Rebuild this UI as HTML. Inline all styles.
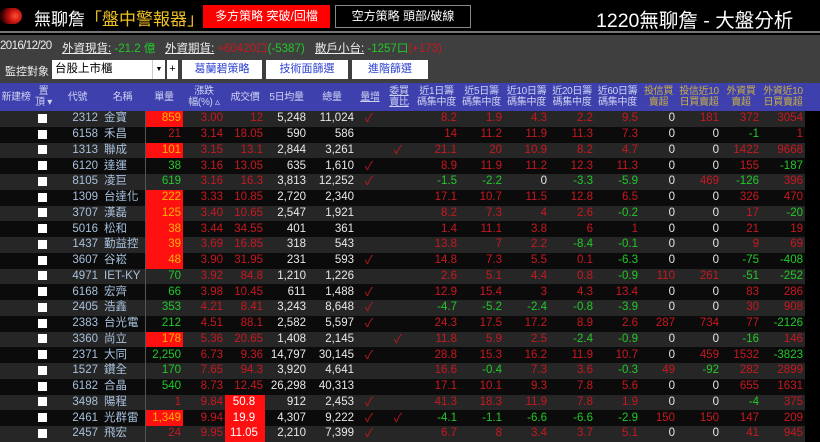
<!DOCTYPE html><html><head><meta charset="utf-8"><style>
*{margin:0;padding:0;box-sizing:border-box}
body{width:820px;height:442px;overflow:hidden;background:#000;font-family:"Liberation Sans","Noto Sans CJK TC",sans-serif;color:#ddd;position:relative}
.top{position:absolute;left:0;top:0;width:820px;height:33px;background:#000;border-bottom:2px solid #777}
.ab{position:absolute;white-space:nowrap}
.bar{position:absolute;left:0;top:35px;width:820px;height:48px;background:#3f3f3f}
.btn{position:absolute;background:#fff;color:#2a3fd0;font-size:11px;text-align:center;line-height:18px;height:19px;top:60px}
.hdr{position:absolute;left:0;top:83px;width:820px;height:28px;background:#3e40ae}
.h{position:absolute;top:83px;height:28px;display:flex;align-items:center;justify-content:center;text-align:center;font-size:10px;line-height:11px;color:#cfd3f0;white-space:nowrap;letter-spacing:-0.3px}
.y{color:#c8b040}
.t{font-size:11.5px;top:40px;color:#eee}
table{position:absolute;left:0;top:111px;border-collapse:collapse;table-layout:fixed;width:805px;font-size:11.5px}
td{height:15.75px;padding:0 2px 0 0;text-align:right;white-space:nowrap;overflow:hidden;line-height:15px}
tr:nth-child(odd){background:#262626}
tr:nth-child(even){background:#0b0b0b}
.r{color:#c81820}.g{color:#22c82a}.w{color:#e8e8e8}
.c{color:#a8c0dc}.n{color:#a8c0dc;text-align:left;padding-left:4px}
.R{background:#ff1010;color:#ffb400}.P{background:#ff1010;color:#fff}
.cb{text-align:center}.cb i{display:inline-block;width:9px;height:9px;background:#fff;vertical-align:middle}
.k{color:#c01820;text-align:center;font-size:12px}
td.d{border-left:1px solid #555}
</style></head><body>
<div class="top">
<div class="ab" style="left:0;top:8px;width:22px;height:16px;border-radius:8px;background:radial-gradient(circle at 70% 50%,#ff5030 0,#c01010 40%,#300 80%)"></div>
<div class="ab" style="left:34px;top:5px;font-size:17px;color:#fff">無聊詹<span style="color:#f0c020">「盤中警報器」</span></div>
<div class="ab" style="left:203px;top:5px;width:127px;height:23px;background:#f00;color:#fff;font-size:12px;text-align:center;line-height:23px">多方策略 突破/回檔</div>
<div class="ab" style="left:335px;top:5px;width:136px;height:23px;border:1px solid #888;color:#fff;font-size:12px;text-align:center;line-height:21px">空方策略 頭部/破線</div>
<div class="ab" style="left:596px;top:4px;font-size:19.5px;color:#fff">1220無聊詹 - 大盤分析</div>
</div>
<div class="bar"></div>
<div class="ab t" style="left:0;letter-spacing:-0.6px">2016/12/20</div>
<div class="ab t" style="left:62px"><u>外資現貨:</u> <span class="g">-21.2 億</span></div>
<div class="ab t" style="left:165px"><u>外資期貨:</u> <span class="r">+60420口</span><span class="g">(-5387)</span></div>
<div class="ab t" style="left:315px"><u>散戶小台:</u> <span class="g">-1257口</span><span class="r">(+173)</span></div>
<div class="ab" style="left:5px;top:63px;font-size:11px;color:#eee">監控對象</div>
<div class="ab" style="left:52px;top:60px;width:100px;height:19px;background:#fff;color:#000;font-size:11.5px;line-height:19px;padding-left:3px">台股上市櫃</div>
<div class="ab" style="left:152px;top:60px;width:13px;height:19px;background:#fff;color:#000;font-size:7px;line-height:19px;text-align:center;border-left:1px solid #ccc">▼</div>
<div class="ab" style="left:167px;top:60px;width:11px;height:19px;background:#fff;color:#000;font-size:11px;line-height:19px;text-align:center">+</div>
<div class="btn" style="left:182px;width:80px">葛蘭碧策略</div>
<div class="btn" style="left:266px;width:82px">技術面篩選</div>
<div class="btn" style="left:352px;width:76px">進階篩選</div>
<div class="hdr"></div>
<div class="h" style="left:0;width:32px">新建榜</div>
<div class="h" style="left:32px;width:23px">置<br>頂 ▾</div>
<div class="h" style="left:55px;width:45px">代號</div>
<div class="h" style="left:100px;width:45px">名稱</div>
<div class="h" style="left:145px;width:38px">單量</div>
<div class="h" style="left:183px;width:42px">漲跌<br>幅(%) ▵</div>
<div class="h" style="left:225px;width:40px">成交價</div>
<div class="h" style="left:265px;width:43px">5日均量</div>
<div class="h" style="left:308px;width:48px">總量</div>
<div class="h" style="left:356px;width:28px"><u>量增</u></div>
<div class="h" style="left:384px;width:30px"><u>委買<br>賣比</u></div>
<div class="h" style="left:414px;width:45px">近1日籌<br>碼集中度</div>
<div class="h" style="left:459px;width:45px">近5日籌<br>碼集中度</div>
<div class="h" style="left:504px;width:45px">近10日籌<br>碼集中度</div>
<div class="h" style="left:549px;width:46px">近20日籌<br>碼集中度</div>
<div class="h" style="left:595px;width:45px">近60日籌<br>碼集中度</div>
<div class="h y" style="left:640px;width:37px">投信買<br>賣超</div>
<div class="h y" style="left:677px;width:44px">投信近10<br>日買賣超</div>
<div class="h y" style="left:721px;width:40px">外資買<br>賣超</div>
<div class="h y" style="left:761px;width:44px">外資近10<br>日買賣超</div>
<table>
<colgroup><col style="width:32px"><col style="width:23px"><col style="width:45px"><col style="width:45px"><col style="width:38px"><col style="width:42px"><col style="width:40px"><col style="width:43px"><col style="width:48px"><col style="width:28px"><col style="width:30px"><col style="width:45px"><col style="width:45px"><col style="width:45px"><col style="width:46px"><col style="width:45px"><col style="width:37px"><col style="width:44px"><col style="width:40px"><col style="width:44px"></colgroup>
<tr><td></td><td class="cb"><i></i></td><td class="c">2312</td><td class="n">金寶</td><td class="R d">859</td><td class="r">3.00</td><td class="r">12</td><td class="w">5,248</td><td class="w">11,024</td><td class="k">✓</td><td class="k"></td><td class="r">8.2</td><td class="r">1.9</td><td class="r">4.3</td><td class="r">2.2</td><td class="r">9.5</td><td class="w">0</td><td class="r">181</td><td class="r">372</td><td class="r">3054</td></tr>
<tr><td></td><td class="cb"><i></i></td><td class="c">6158</td><td class="n">禾昌</td><td class="r d">21</td><td class="r">3.14</td><td class="r">18.05</td><td class="w">590</td><td class="w">586</td><td class="k"></td><td class="k"></td><td class="r">14</td><td class="r">11.2</td><td class="r">11.9</td><td class="r">11.3</td><td class="r">7.3</td><td class="w">0</td><td class="w">0</td><td class="g">-1</td><td class="r">1</td></tr>
<tr><td></td><td class="cb"><i></i></td><td class="c">1313</td><td class="n">聯成</td><td class="R d">101</td><td class="r">3.15</td><td class="r">13.1</td><td class="w">2,844</td><td class="w">3,261</td><td class="k"></td><td class="k">✓</td><td class="r">21.1</td><td class="r">20</td><td class="r">10.9</td><td class="r">8.2</td><td class="r">4.7</td><td class="w">0</td><td class="w">0</td><td class="r">1422</td><td class="r">9668</td></tr>
<tr><td></td><td class="cb"><i></i></td><td class="c">6120</td><td class="n">達運</td><td class="g d">38</td><td class="r">3.16</td><td class="r">13.05</td><td class="w">635</td><td class="w">1,610</td><td class="k">✓</td><td class="k"></td><td class="r">8.9</td><td class="r">11.9</td><td class="r">11.2</td><td class="r">12.3</td><td class="r">11.3</td><td class="w">0</td><td class="w">0</td><td class="r">155</td><td class="g">-187</td></tr>
<tr><td></td><td class="cb"><i></i></td><td class="c">8105</td><td class="n">凌巨</td><td class="g d">619</td><td class="r">3.16</td><td class="r">16.3</td><td class="w">3,813</td><td class="w">12,252</td><td class="k">✓</td><td class="k"></td><td class="g">-1.5</td><td class="g">-2.2</td><td class="w">0</td><td class="g">-3.3</td><td class="g">-5.9</td><td class="w">0</td><td class="r">469</td><td class="g">-126</td><td class="r">396</td></tr>
<tr><td></td><td class="cb"><i></i></td><td class="c">1309</td><td class="n">台達化</td><td class="R d">222</td><td class="r">3.33</td><td class="r">10.85</td><td class="w">2,720</td><td class="w">2,340</td><td class="k"></td><td class="k"></td><td class="r">17.1</td><td class="r">10.7</td><td class="r">11.5</td><td class="r">12.8</td><td class="r">6.5</td><td class="w">0</td><td class="w">0</td><td class="r">326</td><td class="r">470</td></tr>
<tr><td></td><td class="cb"><i></i></td><td class="c">3707</td><td class="n">漢磊</td><td class="R d">125</td><td class="r">3.40</td><td class="r">10.65</td><td class="w">2,547</td><td class="w">1,921</td><td class="k"></td><td class="k"></td><td class="r">8.2</td><td class="r">7.3</td><td class="r">4</td><td class="r">2.6</td><td class="g">-0.2</td><td class="w">0</td><td class="w">0</td><td class="r">17</td><td class="g">-20</td></tr>
<tr><td></td><td class="cb"><i></i></td><td class="c">5016</td><td class="n">松和</td><td class="R d">38</td><td class="r">3.44</td><td class="r">34.55</td><td class="w">401</td><td class="w">361</td><td class="k"></td><td class="k"></td><td class="r">1.4</td><td class="r">11.1</td><td class="r">3.8</td><td class="r">6</td><td class="r">1</td><td class="w">0</td><td class="w">0</td><td class="r">21</td><td class="r">19</td></tr>
<tr><td></td><td class="cb"><i></i></td><td class="c">1437</td><td class="n">勤益控</td><td class="R d">39</td><td class="r">3.69</td><td class="r">16.85</td><td class="w">318</td><td class="w">543</td><td class="k"></td><td class="k"></td><td class="r">13.8</td><td class="r">7</td><td class="r">2.2</td><td class="g">-8.4</td><td class="g">-0.1</td><td class="w">0</td><td class="w">0</td><td class="r">9</td><td class="r">69</td></tr>
<tr><td></td><td class="cb"><i></i></td><td class="c">3607</td><td class="n">谷崧</td><td class="R d">48</td><td class="r">3.90</td><td class="r">31.95</td><td class="w">231</td><td class="w">593</td><td class="k">✓</td><td class="k"></td><td class="r">14.8</td><td class="r">7.3</td><td class="r">5.5</td><td class="r">0.1</td><td class="g">-6.3</td><td class="w">0</td><td class="w">0</td><td class="g">-75</td><td class="g">-408</td></tr>
<tr><td></td><td class="cb"><i></i></td><td class="c">4971</td><td class="n">IET-KY</td><td class="g d">70</td><td class="r">3.92</td><td class="r">84.8</td><td class="w">1,210</td><td class="w">1,226</td><td class="k"></td><td class="k"></td><td class="r">2.6</td><td class="r">5.1</td><td class="r">4.4</td><td class="r">0.8</td><td class="g">-0.9</td><td class="r">110</td><td class="r">261</td><td class="g">-51</td><td class="g">-252</td></tr>
<tr><td></td><td class="cb"><i></i></td><td class="c">6168</td><td class="n">宏齊</td><td class="g d">66</td><td class="r">3.98</td><td class="r">10.45</td><td class="w">611</td><td class="w">1,488</td><td class="k">✓</td><td class="k"></td><td class="r">12.9</td><td class="r">15.4</td><td class="r">3</td><td class="r">4.3</td><td class="r">13.4</td><td class="w">0</td><td class="w">0</td><td class="r">83</td><td class="r">286</td></tr>
<tr><td></td><td class="cb"><i></i></td><td class="c">2405</td><td class="n">浩鑫</td><td class="g d">353</td><td class="r">4.21</td><td class="r">8.41</td><td class="w">3,243</td><td class="w">8,648</td><td class="k">✓</td><td class="k"></td><td class="g">-4.7</td><td class="g">-5.2</td><td class="g">-2.4</td><td class="g">-0.8</td><td class="g">-3.9</td><td class="w">0</td><td class="w">0</td><td class="r">30</td><td class="r">908</td></tr>
<tr><td></td><td class="cb"><i></i></td><td class="c">2383</td><td class="n">台光電</td><td class="g d">212</td><td class="r">4.51</td><td class="r">88.1</td><td class="w">2,582</td><td class="w">5,597</td><td class="k">✓</td><td class="k"></td><td class="r">24.3</td><td class="r">17.5</td><td class="r">17.2</td><td class="r">8.9</td><td class="r">2.6</td><td class="r">287</td><td class="r">734</td><td class="r">77</td><td class="g">-2126</td></tr>
<tr><td></td><td class="cb"><i></i></td><td class="c">3360</td><td class="n">尚立</td><td class="R d">178</td><td class="r">5.36</td><td class="r">20.65</td><td class="w">1,408</td><td class="w">2,145</td><td class="k"></td><td class="k">✓</td><td class="r">11.8</td><td class="r">5.9</td><td class="r">2.5</td><td class="g">-2.4</td><td class="g">-0.9</td><td class="w">0</td><td class="w">0</td><td class="g">-16</td><td class="r">146</td></tr>
<tr><td></td><td class="cb"><i></i></td><td class="c">2371</td><td class="n">大同</td><td class="g d">2,250</td><td class="r">6.73</td><td class="r">9.36</td><td class="w">14,797</td><td class="w">30,145</td><td class="k">✓</td><td class="k"></td><td class="r">28.8</td><td class="r">15.3</td><td class="r">16.2</td><td class="r">11.9</td><td class="r">10.7</td><td class="w">0</td><td class="r">459</td><td class="r">1532</td><td class="g">-3823</td></tr>
<tr><td></td><td class="cb"><i></i></td><td class="c">1527</td><td class="n">鑽全</td><td class="g d">170</td><td class="r">7.65</td><td class="r">94.3</td><td class="w">3,920</td><td class="w">4,641</td><td class="k"></td><td class="k"></td><td class="r">16.6</td><td class="g">-0.4</td><td class="r">7.3</td><td class="r">3.6</td><td class="g">-0.3</td><td class="r">49</td><td class="g">-92</td><td class="r">282</td><td class="r">2899</td></tr>
<tr><td></td><td class="cb"><i></i></td><td class="c">6182</td><td class="n">合晶</td><td class="g d">540</td><td class="r">8.73</td><td class="r">12.45</td><td class="w">26,298</td><td class="w">40,313</td><td class="k"></td><td class="k"></td><td class="r">17.1</td><td class="r">10.1</td><td class="r">9.3</td><td class="r">7.8</td><td class="r">5.6</td><td class="w">0</td><td class="w">0</td><td class="r">655</td><td class="r">1631</td></tr>
<tr><td></td><td class="cb"><i></i></td><td class="c">3498</td><td class="n">陽程</td><td class="r d">1</td><td class="r">9.84</td><td class="P" style="text-align:center">50.8</td><td class="w">912</td><td class="w">2,453</td><td class="k">✓</td><td class="k"></td><td class="r">41.3</td><td class="r">18.3</td><td class="r">11.9</td><td class="r">7.8</td><td class="r">1.9</td><td class="w">0</td><td class="w">0</td><td class="g">-4</td><td class="r">375</td></tr>
<tr><td></td><td class="cb"><i></i></td><td class="c">2461</td><td class="n">光群雷</td><td class="R d">1,349</td><td class="r">9.94</td><td class="P" style="text-align:center">19.9</td><td class="w">4,307</td><td class="w">9,222</td><td class="k">✓</td><td class="k">✓</td><td class="g">-4.1</td><td class="g">-1.1</td><td class="g">-6.6</td><td class="g">-6.6</td><td class="g">-2.9</td><td class="r">150</td><td class="r">150</td><td class="r">147</td><td class="r">209</td></tr>
<tr><td></td><td class="cb"><i></i></td><td class="c">2457</td><td class="n">飛宏</td><td class="r d">24</td><td class="r">9.95</td><td class="P" style="text-align:center">11.05</td><td class="w">2,210</td><td class="w">7,399</td><td class="k">✓</td><td class="k"></td><td class="r">6.7</td><td class="r">8</td><td class="r">3.4</td><td class="r">3.7</td><td class="r">5.1</td><td class="w">0</td><td class="w">0</td><td class="r">41</td><td class="r">945</td></tr>
</table>
</body></html>
